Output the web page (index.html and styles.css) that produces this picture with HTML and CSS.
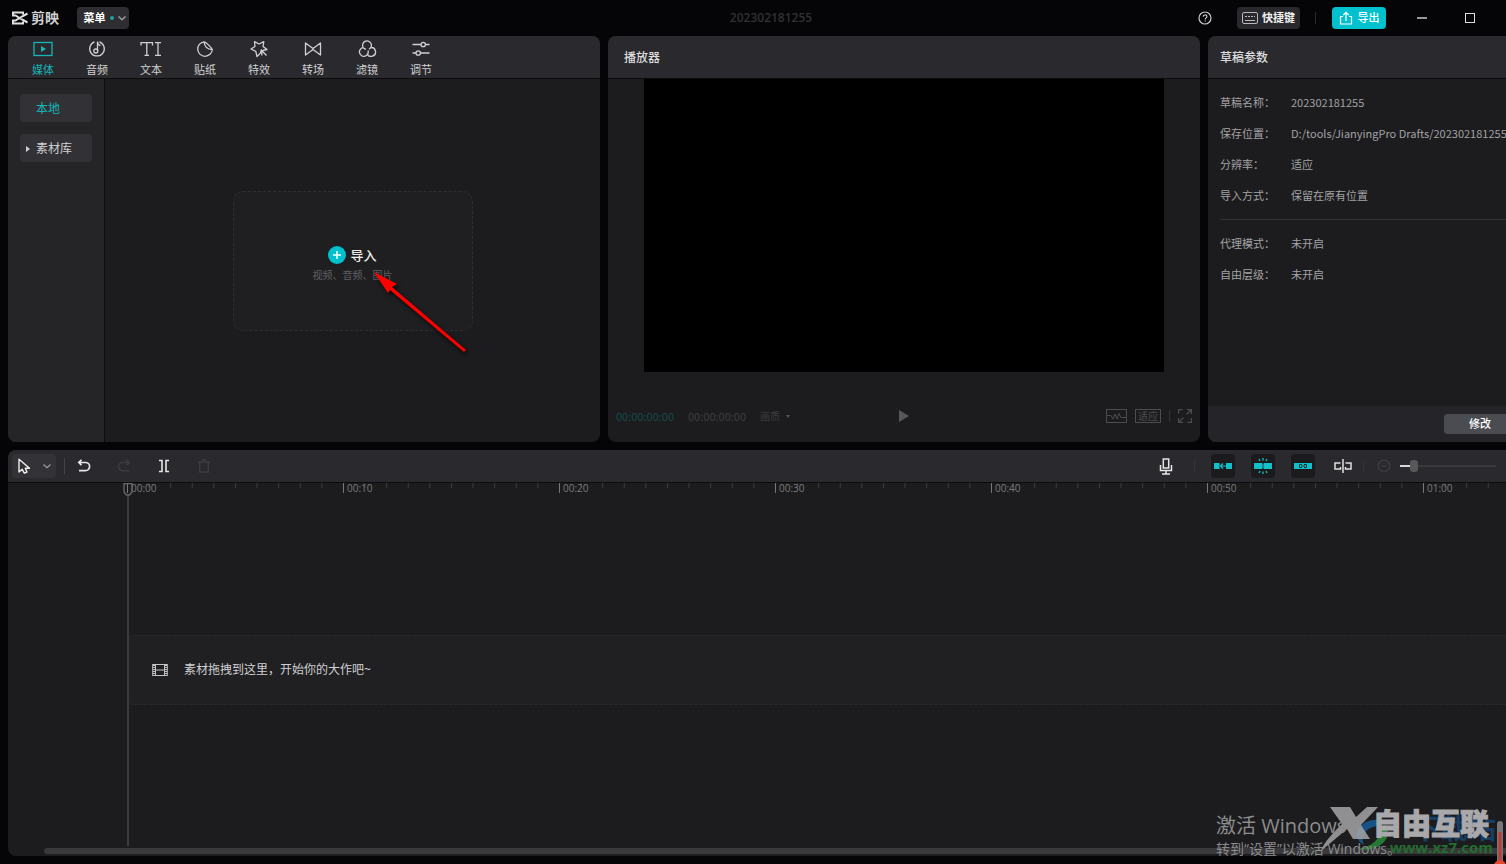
FILE: index.html
```html
<!DOCTYPE html>
<html lang="zh-CN">
<head>
<meta charset="utf-8">
<title>剪映</title>
<link rel="stylesheet" href="styles.css">
</head>
<body>
<div class="app">
  <header class="topbar">
    <div class="topbar-left">
      <div class="brand">
        <svg width="18" height="14" viewBox="0 0 18 14" fill="none" stroke="#e0e0e0" stroke-width="2"><path d="M16.500 2.500 11 5.500 4.500 9.500H2V12.500H12V10.500M16.500 11.500 11 8.500 4.500 4.500H2V1.500H12V3.500"/></svg>
        <span>剪映</span>
      </div>
      <button class="menu-button">菜单<i class="dot"></i><svg width="8" height="5" viewBox="0 0 8 5" fill="none" stroke="#9a9a9c" stroke-width="1.500"><path d="M.5.500 4 3.700 7.500.500"/></svg></button>
    </div>
    <h1 class="doc-title">202302181255</h1>
    <div class="topbar-right">
      <button class="plain help" aria-label="帮助"><svg width="14" height="14" viewBox="0 0 14 14" fill="none" stroke="#c8c8ca" stroke-width="1.200"><circle cx="7" cy="7" r="6"/><path d="M5.200 5.700C5.200 3.200 8.900 3.200 8.900 5.500 8.900 6.900 7.200 6.900 7.200 8.500M7.200 9.500V10.600"/></svg></button>
      <button class="shortcut"><svg width="16" height="12" viewBox="0 0 16 12" fill="none" stroke="#b8b8ba"><rect x=".5" y=".5" width="15" height="11" rx="1.500"/><path d="M3 4.500H13" stroke-dasharray="2 1"/><path d="M3 8.500H13"/></svg>快捷键</button>
      <i class="sep"></i>
      <button class="export"><svg width="14" height="14" viewBox="0 0 14 14" fill="none" stroke="#fff" stroke-width="1.200"><path d="M4 5.500H1.500V13H12.500V5.500H10M7 10V1.500M4.300 4 7 1.300 9.700 4"/></svg>导出</button>
      <button class="plain minimize" aria-label="最小化"><svg width="10" height="12" viewBox="0 0 10 12"><path d="M0 6H10" stroke="#999"  stroke-width="2"/></svg></button>
      <button class="plain" aria-label="最大化"><svg width="10" height="10" viewBox="0 0 10 10"><rect x=".5" y=".5" width="9" height="9" fill="none" stroke="#ddd"/></svg></button>
    </div>
  </header>

  <main class="workspace">
    <section class="panel media">
      <nav class="panel-head tabs">
        <button class="tab active"><svg width="20" height="18" viewBox="0 0 20 18" fill="none" stroke="currentColor" stroke-width="1.300"><rect x="1" y="2.500" width="18" height="13"/><path d="M8 6 13 9 8 12Z" fill="currentColor" stroke="none"/></svg>媒体</button>
        <button class="tab"><svg width="20" height="18" viewBox="0 0 20 18" fill="none" stroke="currentColor" stroke-width="1.300"><path d="M7.500 1.800A7.300 7.300 0 1 0 12.500 1.800M10.500 11V1.500C10.500 4 11.500 5 13.500 5.500"/><circle cx="8.800" cy="11" r="2"/></svg>音频</button>
        <button class="tab"><svg width="22" height="18" viewBox="0 0 22 18" fill="none" stroke="currentColor" stroke-width="1.300"><path d="M1 5.500V2.600H12.500V5.500M6.800 2.600V15.400M4.500 15.400H9M15 2.600H21M18 2.600V15.400M15 15.400H21"/></svg>文本</button>
        <button class="tab"><svg width="20" height="18" viewBox="0 0 20 18" fill="none" stroke="currentColor" stroke-width="1.300" stroke-linejoin="round"><path d="M9 1.800A7.300 7.300 0 1 0 17.300 9.500C17 8.500 11.500 2 9 1.800ZM9 1.800C9.500 6.500 11.500 9.500 17.300 9.500"/></svg>贴纸</button>
        <button class="tab"><svg width="20" height="18" viewBox="0 0 20 18" fill="none" stroke="currentColor" stroke-width="1.300" stroke-linejoin="round"><path d="M11.500 13 8 16.500 6.800 11.300 2 9 6 6.500 5.500 1.700 10 4 14.800 1.700 14 6.500 18 9.500 13.500 10.500M11.500 13 12.200 10 17.500 15.500M12.800 10.600V15.500"/></svg>特效</button>
        <button class="tab"><svg width="20" height="18" viewBox="0 0 20 18" fill="none" stroke="currentColor" stroke-width="1.300" stroke-linejoin="round"><path d="M2.500 3 10 8.500V9.500L2.500 15ZM17.500 3 10 8.500V9.500L17.500 15Z"/></svg>转场</button>
        <button class="tab"><svg width="20" height="18" viewBox="0 0 20 18" fill="none" stroke="currentColor" stroke-width="1.300"><path d="M6.200 7.500A4.400 4.400 0 1 1 12 9.200M13.500 7.600A4.400 4.400 0 1 1 10 13.500M11 10.500A4.400 4.400 0 1 1 6 7.600C7 8.300 7.800 9 9 9.300"/></svg>滤镜</button>
        <button class="tab"><svg width="20" height="18" viewBox="0 0 20 18" fill="none" stroke="currentColor" stroke-width="1.300"><path d="M1.500 4.500H10M14.500 4.500H18.500M1.500 13H5M9.500 13H18.500"/><circle cx="12.200" cy="4.500" r="2.200"/><circle cx="7.200" cy="13" r="2.200"/></svg>调节</button>
      </nav>
      <div class="media-body">
        <aside class="sidebar">
          <button class="side-item active">本地</button>
          <button class="side-item"><i class="caret"></i>素材库</button>
        </aside>
        <div class="media-area">
          <div class="import-box">
            <button class="import-button"><svg width="18" height="18" viewBox="0 0 18 18"><circle cx="9" cy="9" r="9" fill="#00c1cd"/><path d="M9 5V13M5 9H13" stroke="#fff" stroke-width="1.500"/></svg>导入</button>
            <p class="import-hint">视频、音频、图片</p>
            <svg class="arrow" width="100" height="90" viewBox="0 0 100 90"><path d="M1 1 24 13 19 16 93 79 91 81 17 19 15 22Z" fill="#f00"/></svg>
          </div>
        </div>
      </div>
    </section>

    <section class="panel player">
      <h2 class="panel-head heading">播放器</h2>
      <div class="stage"><div class="video"></div></div>
      <div class="player-bar">
        <div class="player-info">
          <span class="time-now">00:00:00:00</span>
          <span>00:00:00:00</span>
          <button class="quality">画质<i></i></button>
        </div>
        <button class="plain" aria-label="播放"><svg width="12" height="14" viewBox="0 0 12 14"><path d="M1 1 11 7 1 13Z" fill="#57575a"/></svg></button>
        <div class="player-tools">
          <button class="plain" aria-label="波形"><svg width="21" height="14" viewBox="0 0 21 14" fill="none" stroke="#4c4c4f"><rect x=".5" y=".5" width="20" height="13"/><path d="M1 6.500H5L7 10 9 5 11 10 13 4.500 15 8.500H20"/></svg></button>
          <button class="fit">适应</button>
          <i class="sep short"></i>
          <button class="plain" aria-label="全屏"><svg width="14" height="14" viewBox="0 0 14 14" fill="none" stroke="#4c4c4f" stroke-width="1.200"><path d="M.6 4.500V.6H4.500M9 .6H13.400V5M13.400 9V13.400H9.500M5 13.400H.6V9M8.500 5.500 13 1M5.500 8.500 1 13"/></svg></button>
        </div>
      </div>
    </section>

    <section class="panel params">
      <h2 class="panel-head heading">草稿参数</h2>
      <div class="param-body">
        <dl class="param-list">
          <dt>草稿名称：</dt><dd>202302181255</dd>
          <dt>保存位置：</dt><dd>D:/tools/JianyingPro Drafts/202302181255</dd>
          <dt>分辨率：</dt><dd>适应</dd>
          <dt>导入方式：</dt><dd>保留在原有位置</dd>
        </dl>
        <hr>
        <dl class="param-list">
          <dt>代理模式：</dt><dd>未开启</dd>
          <dt>自由层级：</dt><dd>未开启</dd>
        </dl>
      </div>
      <footer class="param-foot"><button class="modify">修改</button></footer>
    </section>

    <section class="panel timeline">
      <div class="toolbar">
        <button class="select-tool" aria-label="选择"><svg width="14" height="16" viewBox="0 0 14 16" fill="none" stroke="#eee" stroke-width="1.400" stroke-linejoin="round"><path d="M2 1.200V14L5.200 11.300 7.300 15.200 10 14 8.300 10.300H12.500Z"/></svg><svg width="8" height="5" viewBox="0 0 8 5" fill="none" stroke="#999" stroke-width="1.300"><path d="M.5.500 4 3.700 7.500.500"/></svg></button>
        <i class="sep"></i>
        <button class="tool" aria-label="撤销"><svg width="14" height="14" viewBox="0 0 14 14" fill="none" stroke="#e6e6e6" stroke-width="1.700"><path d="M2 3.500H8.500A4.100 4.100 0 0 1 8.500 11.700H2M4.500.8 1.800 3.500 4.500 6.200"/></svg></button>
        <button class="tool" aria-label="重做"><svg width="14" height="14" viewBox="0 0 14 14" fill="none" stroke="#3d3d41" stroke-width="1.600"><path d="M12 3.500H5.500A4.100 4.100 0 0 0 5.500 11.700H12M9.500.8 12.200 3.500 9.500 6.200"/></svg></button>
        <button class="tool" aria-label="分割"><svg width="12" height="14" viewBox="0 0 12 14" fill="none" stroke="#e6e6e6" stroke-width="1.600"><path d="M1 1.500H4V12.500H1M11 1.500H8V12.500H11"/></svg></button>
        <button class="tool" aria-label="删除"><svg width="14" height="14" viewBox="0 0 14 14" fill="none" stroke="#3d3d41" stroke-width="1.400"><path d="M1 3H13M2.700 3V13H11.300V3M5 1H9"/></svg></button>
        <div class="toolbar-right">
          <button class="tool" aria-label="录音"><svg width="14" height="17" viewBox="0 0 14 17" fill="none" stroke="#e6e6e6" stroke-width="1.500"><path d="M4.300 1H9.700V10H4.300ZM1.500 7V12.500H12.500V7M7 12.500V16M3 16H11"/></svg></button>
          <i class="sep short"></i>
          <button class="tool toggle" aria-label="主轨磁吸"><svg width="18" height="16" viewBox="0 0 18 16"><path d="M0 5H5.500V11H0ZM12 5H18V11H12Z" fill="#12c0ca"/><path d="M9 5.500 6.500 8 9 10.500M7 8H12" fill="none" stroke="#12c0ca" stroke-width="1.200"/></svg></button>
          <button class="tool toggle" aria-label="自动吸附"><svg width="18" height="18" viewBox="0 0 18 18"><path d="M0 6H8V12H0ZM10 6H18V12H10Z" fill="#12c0ca"/><path d="M9 6.500V11.500M9 1V3.500M9 14.500V17M5 2 6 4M13 2 12 4M5 16 6 14M13 16 12 14" stroke="#12c0ca" stroke-width="1.300"/></svg></button>
          <button class="tool toggle" aria-label="联动"><svg width="18" height="16" viewBox="0 0 18 16"><rect y="5" width="18" height="6" fill="#12c0ca"/><path d="M8 6.500H5.500V9.500H8M10 6.500H12.500V9.500H10M7 8H11" fill="none" stroke="#173436"/></svg></button>
          <button class="tool" aria-label="预览轴"><svg width="18" height="16" viewBox="0 0 18 16" fill="none" stroke="#e0e0e0" stroke-width="1.500"><path d="M9 1V15M6.500 5H1V11H6.500V9M11.500 5H17V11H11.500V9"/></svg></button>
          <i class="sep short"></i>
          <button class="tool" aria-label="缩小"><svg width="14" height="14" viewBox="0 0 14 14" fill="none" stroke="#3d3d41" stroke-width="1.400"><circle cx="7" cy="7" r="5.800"/><path d="M4.500 7H9.500"/></svg></button>
          <input class="zoom" type="range" min="0" max="100" value="11" aria-label="时间线缩放">
        </div>
      </div>
      <div class="tracks">
        <div class="ruler">
          <span>00:00</span><span>00:10</span><span>00:20</span><span>00:30</span><span>00:40</span><span>00:50</span><span>01:00</span>
        </div>
        <div class="drop-track">
          <svg width="16" height="12" viewBox="0 0 16 12" fill="none" stroke="#c4c4c6"><rect x=".7" y=".5" width="14.600" height="11"/><path d="M3.500.5V11.500M12.500.5V11.500M3.500 6H12.500"/><path d="M2 1V11M14 1V11" stroke-width="2" stroke-dasharray="1 1"/></svg>
          <span>素材拖拽到这里，开始你的大作吧~</span>
        </div>
        <svg class="playhead" width="10" height="13" viewBox="0 0 10 13" fill="none" stroke="#6a6a6c" stroke-width="1.300"><path d="M1 .7H9V9L6.500 12H3.500L1 9Z"/></svg>
        <div class="playline"></div>
        <div class="scrollbar"></div>
      </div>
    </section>
  </main>

  <div class="watermark">
    <svg class="mark" width="190" height="64" viewBox="0 0 190 64">
      <path d="M64 20C42 18 34 38 48 45 44 34 50 27 66 25Z" fill="#17609c" opacity=".8"/>
      <path d="M70 25C78 40 60 53 42 49 58 46 66 38 62 27Z" fill="#2b8f3b" opacity=".8"/>
      <path d="M14 7H34L40 17 51 7H62L45 25 54 39H37L31 29 5 51C8 42 18 32 26 24Z" fill="#a5a5a7" opacity=".85"/>
      <path d="M184 24V64" stroke="#77777b" stroke-width="6" stroke-linecap="round"/>
      <path d="M184 32V64" stroke="#bd3b32" stroke-width="3"/>
      <circle cx="184" cy="66" r="6" fill="#e5482d"/>
    </svg>
    <div class="activate"><p class="activate-title">激活 Windows</p><p class="activate-text">转到“设置”以激活 Windows。</p></div>
    <span class="site-back">下载站</span>
    <span class="site-name">自由互联</span>
    <span class="site-url">www.xz7.com</span>
  </div>
</div>
</body>
</html>
```
FILE: styles.css
```css
* { box-sizing: border-box; }
body {
  margin: 0;
  background: #050507;
  color: #d0d0d2;
  font: 11px/16px "Open Sans", "Noto Sans CJK SC", sans-serif;
  overflow: hidden;
}
button {
  border: 0;
  padding: 0;
  background: none;
  color: inherit;
  font: inherit;
  display: flex;
  align-items: center;
  justify-content: center;
  flex-shrink: 0;
}
svg { display: block; flex-shrink: 0; }
h1, h2, p, dl, dd { margin: 0; }
.app { position: relative; display: flex; flex-direction: column; height: 100vh; overflow: hidden; }

.topbar { height: 36px; flex-shrink: 0; display: grid; grid-template-columns: 1fr auto 1fr; align-items: center; padding: 0 31px 0 11px; }
.topbar-left, .topbar-right { display: flex; align-items: center; }
.topbar-right { justify-content: flex-end; }
.brand { display: flex; align-items: center; gap: 2px; width: 66px; font-size: 14px; font-weight: 700; }
.menu-button { width: 52px; height: 22px; border-radius: 4px; background: #2e2e32; color: #fff; font-weight: 700; gap: 4px; padding-left: 3px; }
.dot { width: 4px; height: 4px; border-radius: 50%; background: #17a3a5; }
.doc-title { padding-left: 56px; font-size: 12px; font-weight: 600; color: #313134; }
.help { margin-right: 25px; }
.shortcut { width: 63px; height: 22px; gap: 4px; border-radius: 4px; background: #29292d; color: #eee; font-weight: 700; }
.sep { width: 1px; height: 16px; background: #444448; }
.sep.short { height: 12px; background: #343438; }
.topbar .sep { margin: 0 16px 0 15px; height: 12px; background: #29292d; }
.export { width: 54px; height: 22px; gap: 5px; border-radius: 4px; background: #00c1cd; color: #fff; font-weight: 500; }
.minimize { margin: 0 38px 0 31px; }

.workspace { flex: 1; min-height: 0; display: grid; grid-template-columns: 1fr 1fr 298px; grid-template-rows: 1fr 1fr; gap: 8px; padding: 0 0 8px 8px; }
.panel { min-width: 0; min-height: 0; display: flex; flex-direction: column; overflow: hidden; border-radius: 8px; background: #1c1c1e; }
.panel-head { height: 43px; flex-shrink: 0; background: #2a2a2e; border-bottom: 1px solid #0b0b0c; }
.heading { padding: 0 16px; font-size: 12px; line-height: 44px; font-weight: 500; color: #dcdcde; }

.tabs { display: flex; padding-left: 8px; }
.tab { width: 54px; flex-direction: column; gap: 4px; padding-top: 4px; }
.active { color: #16b5b9; }
.media-body { flex: 1; display: flex; }
.sidebar { width: 97px; display: flex; flex-direction: column; gap: 12px; padding: 15px 12px; background: #252528; border-right: 1px solid #0d0d0e; }
.side-item { height: 28px; justify-content: flex-start; padding: 2px 0 0 16px; border-radius: 4px; background: #323236; font-size: 12px; }
.caret { width: 0; margin: 0 6px 0 -10px; border-left: 4px solid #d0d0d2; border-top: 3px solid transparent; border-bottom: 3px solid transparent; }
.media-area { flex: 1; display: flex; align-items: center; justify-content: center; }
.import-box { position: relative; width: 240px; height: 140px; display: flex; flex-direction: column; align-items: center; justify-content: center; padding-top: 6px; border: 1px dashed #2e2e31; border-radius: 10px; background: #1f1f21; }
.import-button { gap: 4px; font-size: 13px; line-height: 20px; font-weight: 500; color: #eee; }
.import-hint { padding-top: 2px; font-size: 10px; line-height: 16px; color: #606063; }
.arrow { position: absolute; left: 139px; top: 79px; filter: drop-shadow(2px 3px 2px #000b); }

.stage { flex: 1; display: flex; justify-content: center; align-items: flex-start; }
.video { width: 88%; aspect-ratio: 16 / 9; background: #000; }
.player-bar { height: 52px; display: grid; grid-template-columns: 1fr auto 1fr; align-items: center; padding: 0 8px; color: #3c3c3f; }
.player-info { display: flex; gap: 14px; font-family: "Noto Sans CJK SC", sans-serif; }
.time-now { color: #174b49; }
.quality { gap: 6px; font-size: 10px; }
.quality i { border-top: 3px solid #555558; border-left: 2px solid transparent; border-right: 2px solid transparent; }
.player-tools { display: flex; align-items: center; justify-content: flex-end; gap: 8px; }
.fit { width: 26px; height: 14px; border: 1px solid #4c4c4f; color: #4c4c4f; font-size: 10px; line-height: 12px; }

.params { border-radius: 8px 0 0 8px; }
.params .heading { padding-left: 12px; }
.param-body { flex: 1; padding: 8px 0 0 12px; color: #a2a2a4; }
.param-list { display: grid; grid-template-columns: 71px 1fr; line-height: 31px; white-space: nowrap; }
.param-list dd { font-family: "Noto Sans CJK SC", sans-serif; }
.param-body hr { height: 1px; margin: 8px 0; border: 0; background: #343437; }
.param-foot { height: 36px; display: flex; align-items: center; justify-content: flex-end; background: #252529; }
.modify { width: 72px; height: 20px; margin-right: -10px; border-radius: 4px; background: #4b4b52; color: #fff; font-weight: 500; }

.timeline { grid-column: 1 / -1; border-radius: 8px 0 0 8px; }
.toolbar { height: 33px; flex-shrink: 0; display: flex; align-items: center; gap: 16px; padding-left: 4px; background: #2a2a2e; border-bottom: 1px solid #0b0b0c; }
.select-tool { width: 44px; height: 24px; gap: 12px; border-radius: 4px; background: #333337; }
.toolbar > .sep { margin: 0 -9px 0 -8px; }
.tool { width: 24px; height: 24px; }
.toggle { border-radius: 4px; background: #1b1b1d; }
.toolbar-right { margin-left: auto; display: flex; align-items: center; gap: 16px; padding-right: 10px; }
.toolbar-right .sep { margin: 0 -8px; }
.toolbar-right .sep:nth-child(2) { margin: 0; }
.zoom { appearance: none; width: 96px; height: 12px; margin: 0 0 0 -12px; background: linear-gradient(90deg, #d8d8da 10px, #3a3a3e 10px) center / 100% 2px no-repeat; }
.zoom::-webkit-slider-thumb { appearance: none; width: 8px; height: 12px; border-radius: 3px; background: #58585b; }

.tracks { position: relative; flex: 1; padding: 0 0 12px 119px; display: flex; flex-direction: column; }
.ruler { display: flex; height: 12px; color: #7a7a7d; line-height: 10px; font-size: 10px; }
.ruler span { width: 216px; flex-shrink: 0; padding-left: 4px; background: linear-gradient(90deg, #77777a 1px, transparent 1px) 0 0 / 100% 10px no-repeat, linear-gradient(90deg, #3d3d40 1px, transparent 1px) 0 0 / 10% 5px repeat-x; }
.drop-track { height: 70px; margin: auto 0; display: flex; align-items: center; gap: 16px; padding-left: 24px; border: 1px dashed #29292c; border-right: 0; border-radius: 6px 0 0 6px; background: #202022; font-size: 12px; }
.playhead { position: absolute; left: 115px; top: 0; }
.playline { position: absolute; left: 119px; top: 13px; bottom: 10px; width: 2px; background: #3c3c3e; }
.scrollbar { position: absolute; left: 36px; right: 0; bottom: 2px; height: 6px; border-radius: 3px 0 0 3px; background: #39393b; }

.watermark { position: absolute; right: 0; bottom: 0; width: 290px; height: 64px; overflow: hidden; pointer-events: none; white-space: nowrap; }
.activate { position: relative; color: #8c8c8e; }
.activate-title { padding-top: 13px; font-size: 20px; line-height: 26px; }
.activate-text { font-size: 14px; line-height: 20px; }
.mark { position: absolute; right: 0; bottom: 0; }
.site-name, .site-back, .site-url { position: absolute; font-weight: 900; }
.site-name { right: 17px; top: 6px; font-size: 29px; line-height: 36px; color: #a9a9ac; -webkit-text-stroke: 1px #a9a9ac; }
.site-back { right: 10px; top: 10px; font-size: 28px; line-height: 36px; color: #173d60; font-weight: 700; }
.site-url { right: 13px; top: 37px; font-size: 15px; line-height: 20px; color: #246c30; font-weight: 700; }
```
